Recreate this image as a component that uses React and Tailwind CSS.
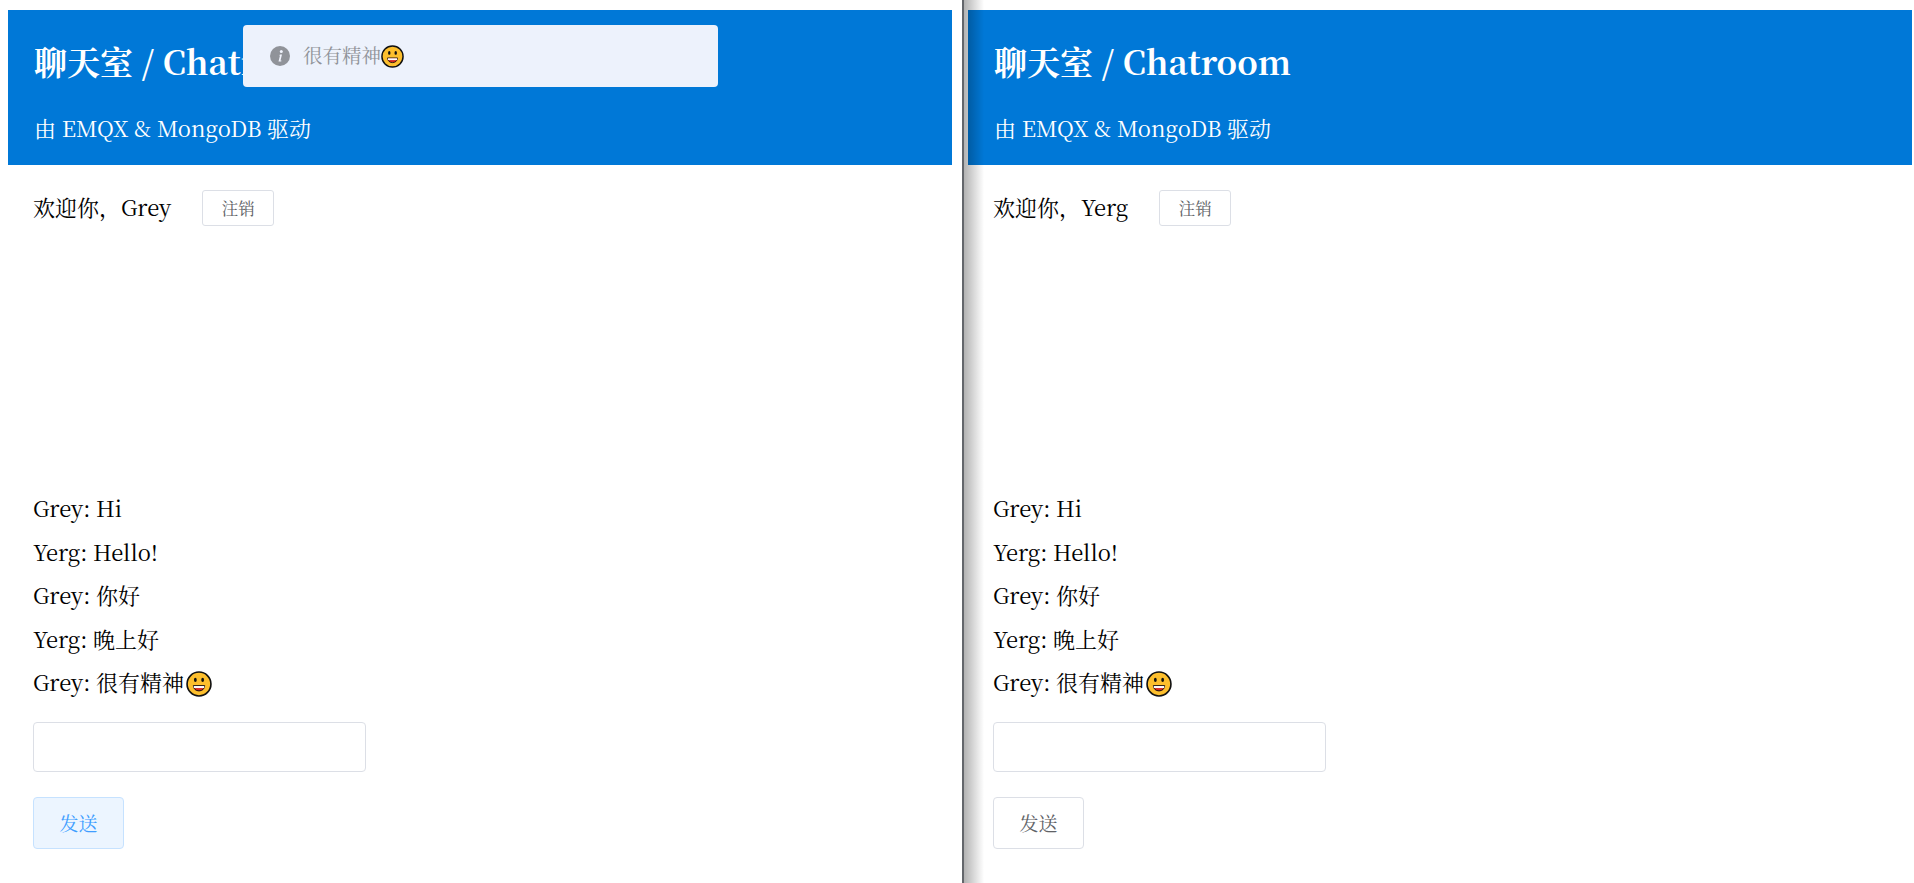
function GrinEmoji({ size = 26, className = '' }) {
  return (
    <svg width={size} height={size} viewBox="0 0 32 32" className={`inline-block shrink-0 align-[-6px] ${className}`}>
      <circle cx="16" cy="16" r="14.700" fill="#fdbf2d" stroke="#111" strokeWidth="2" />
      <ellipse cx="11.500" cy="11" rx="1.700" ry="2.600" fill="#111" />
      <ellipse cx="20.500" cy="11" rx="1.700" ry="2.600" fill="#111" />
      <path d="M9 18h14c0 3.800-3 6.500-7 6.500S9 21.800 9 18z" fill="#d7261e" stroke="#111" strokeWidth="1.200" />
      <path d="M9.500 18.500h13v2.500h-13z" fill="#fff" />
    </svg>
  );
}

function InfoIcon() {
  return (
    <svg width="20" height="20" viewBox="0 0 20 20" className="shrink-0">
      <circle cx="10" cy="10" r="10" fill="#909399" />
      <circle cx="11.300" cy="5.500" r="1.500" fill="#f0f3fc" />
      <path d="M10 8.500h2l-1.500 6h1l-.3 1H8.500l1.500-6H9z" fill="#f0f3fc" />
    </svg>
  );
}

const messages = [
  { user: 'Grey', text: 'Hi' },
  { user: 'Yerg', text: 'Hello!' },
  { user: 'Grey', text: '你好' },
  { user: 'Yerg', text: '晚上好' },
  { user: 'Grey', text: '很有精神', emoji: true },
];

function ChatPane({ name, sendHover }) {
  return (
    <div>
      <header className="h-[155px] bg-[#0078d7] pl-[26px] text-white">
        <h1 className="pt-[31px] text-[33px] leading-[40px] font-bold">聊天室 / Chatroom</h1>
        <p className="mt-[32px] text-[22px] leading-[30px]">由 EMQX &amp; MongoDB 驱动</p>
      </header>
      <div className="pl-[25px]">
        <div className="mt-[25px] flex h-[36px] items-center">
          <span className="pb-[2px] text-[22px] leading-[34px] text-black">欢迎你，{name}</span>
          <button className="ml-[31px] h-[36px] w-[72px] rounded-[3px] border border-[#dcdfe6] bg-white text-[16.500px] text-[#606266]">
            注销
          </button>
        </div>
        <div className="mt-[260px]">
          {messages.map((m, i) => (
            <p key={i} className="h-[43.600px] text-[22px] leading-[43.600px] text-black">
              {m.user}: {m.text}
              {m.emoji && <GrinEmoji className="ml-[2px]" />}
            </p>
          ))}
        </div>
        <input className="mt-[18px] block h-[50px] w-[333px] rounded-[4px] border border-[#dcdfe6] bg-white outline-none" />
        <button
          className={`mt-[25px] block h-[52px] w-[91px] rounded-[4px] border text-[19px] ${
            sendHover
              ? 'border-[#c6e2ff] bg-[#ecf5ff] text-[#409eff]'
              : 'border-[#dcdfe6] bg-white text-[#606266]'
          }`}
        >
          发送
        </button>
      </div>
    </div>
  );
}

export default function App() {
  return (
    <div
      className="relative flex h-[883px] overflow-hidden bg-white"
      style={{ fontFamily: '"Noto Serif CJK SC", "Liberation Serif", "Noto Sans CJK SC", serif' }}
    >
      <div className="w-[964px] shrink-0 border-r-2 border-[#63666b] pt-[10px] pl-[8px] pr-[10px]">
        <ChatPane name="Grey" sendHover />
      </div>
      <div className="relative flex-1 pt-[10px] pr-[2px] pl-[4px]">
        <ChatPane name="Yerg" />
        <div className="pointer-events-none absolute inset-y-0 left-0 w-[20px] bg-gradient-to-r from-black/30 to-transparent" />
      </div>

      {/* toast */}
      <div className="absolute top-[25px] left-[243px] flex h-[62px] w-[475px] items-center rounded-[4px] bg-[#edf2fc] pl-[27px] text-[#909399]">
        <InfoIcon />
        <span className="ml-[13px] flex items-center text-[19.500px]">
          很有精神
          <GrinEmoji size={23} />
        </span>
      </div>
    </div>
  );
}
